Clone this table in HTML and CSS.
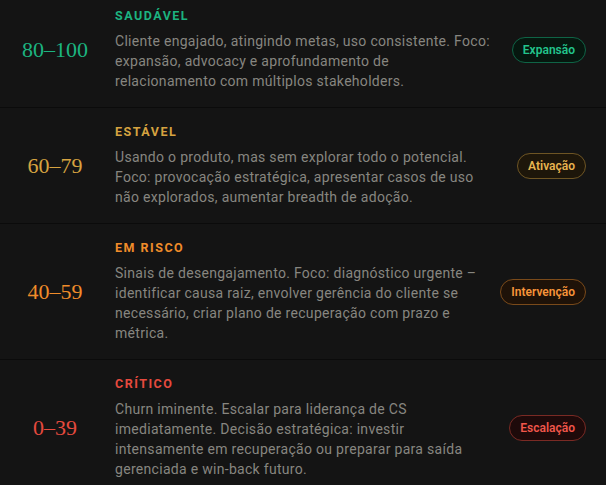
FILE: index.html
```html
<!DOCTYPE html>
<html lang="pt-BR">
  <head>
    <meta charset="UTF-8" />
    <meta name="viewport" content="width=device-width, initial-scale=1.0" />
    <title>Faixas de Health Score</title>
    <link rel="stylesheet" href="styles.css">
  </head>
  <body>
    <div class="tiers">
      <div class="tier tier-green">
        <div class="range">80–100</div>
        <div class="info">
          <h3>Saudável</h3>
          <p>Cliente engajado, atingindo metas, uso consistente. Foco: expansão, advocacy e aprofundamento de relacionamento com múltiplos stakeholders.</p>
        </div>
        <span class="badge">Expansão</span>
      </div>

      <div class="tier tier-gold">
        <div class="range">60–79</div>
        <div class="info">
          <h3>Estável</h3>
          <p>Usando o produto, mas sem explorar todo o potencial. Foco: provocação estratégica, apresentar casos de uso não explorados, aumentar breadth de adoção.</p>
        </div>
        <span class="badge">Ativação</span>
      </div>

      <div class="tier tier-orange">
        <div class="range">40–59</div>
        <div class="info">
          <h3>Em risco</h3>
          <p>Sinais de desengajamento. Foco: diagnóstico urgente – identificar causa raiz, envolver gerência do cliente se necessário, criar plano de recuperação com prazo e métrica.</p>
        </div>
        <span class="badge">Intervenção</span>
      </div>

      <div class="tier tier-red">
        <div class="range">0–39</div>
        <div class="info">
          <h3>Crítico</h3>
          <p>Churn iminente. Escalar para liderança de CS imediatamente. Decisão estratégica: investir intensamente em recuperação ou preparar para saída gerenciada e win-back futuro.</p>
        </div>
        <span class="badge">Escalação</span>
      </div>
    </div>
  </body>
</html>
```

FILE: styles.css
```css
body {
  margin: 0;
  background: #141414;
  font-family: Roboto, "Liberation Sans", sans-serif;
  color: #878680;
}

.tiers {
  margin-top: -8px;
}

.tier {
  display: grid;
  grid-template-columns: 110px 1fr auto;
  column-gap: 5px;
  align-items: center;
  padding: 16px 20px 16px 0;
  border-bottom: 1px solid #0b0b0b;
}

.range {
  text-align: center;
  font-family: "Liberation Serif", serif;
  font-size: 22px;
  font-weight: 500;
  font-variant-numeric: oldstyle-nums;
}

.info {
  margin-right: 15px;
}

.info h3 {
  margin: 0 0 7px;
  font-size: 12.5px;
  line-height: 16px;
  font-weight: 700;
  letter-spacing: 1.5px;
  text-transform: uppercase;
}

.info p {
  margin: 0;
  font-size: 14px;
  line-height: 20px;
  letter-spacing: 0.3px;
}

.badge {
  display: inline-block;
  height: 24px;
  line-height: 24px;
  padding: 0 10px;
  border: 1px solid;
  border-radius: 13px;
  font-size: 12px;
  font-weight: 600;
}

.tier-green { --c: #1cb380; }
.tier-gold { --c: #d6a340; }
.tier-orange { --c: #f08c2a; }
.tier-red { --c: #e64a3e; }

.tier .range,
.tier h3 {
  color: var(--c);
}

.tier-green .badge {
  color: #22c48c;
  background: #06170f;
  border-color: #0f6446;
}

.tier-gold .badge {
  color: #e8b450;
  background: #1d160a;
  border-color: #6e5524;
}

.tier-orange .badge {
  color: #f7953a;
  background: #1e1208;
  border-color: #7a4a1a;
}

.tier-red .badge {
  color: #f0564a;
  background: #1e0a0a;
  border-color: #7a2a24;
}
```
